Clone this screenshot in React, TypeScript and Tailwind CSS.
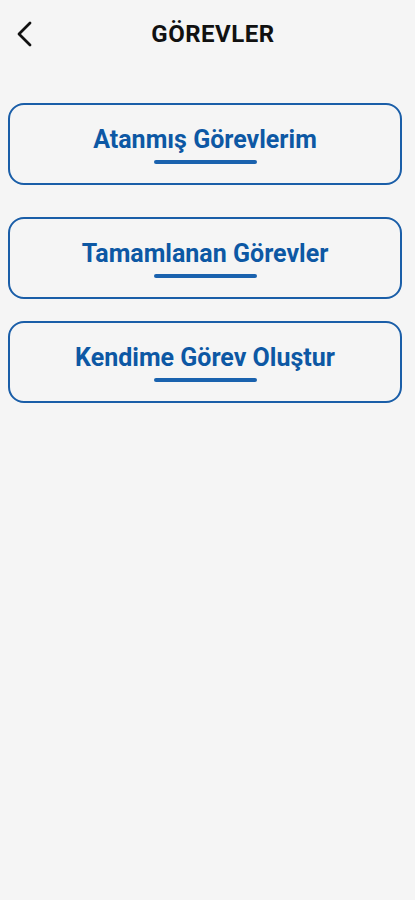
const items = ['Atanmış Görevlerim', 'Tamamlanan Görevler', 'Kendime Görev Oluştur']

export default function App() {
  return (
    <div className="min-h-[900px] bg-[#f5f5f5] font-['Roboto',sans-serif]">
      <div className="relative flex h-[68px] items-center justify-center">
        <button className="absolute left-[15px] top-[20px]">
          <svg width="18" height="28" viewBox="0 0 18 28" fill="none" stroke="#111" strokeWidth="2.8" strokeLinecap="round" strokeLinejoin="round">
            <path d="M15 3 L4 14 L15 25" />
          </svg>
        </button>
        <h1 className="ml-[11px] text-[24px] font-bold tracking-[0.5px] text-[#111]">GÖREVLER</h1>
      </div>
      <div className="flex flex-col pl-2 pt-[35px]">
        {items.map((t, i) => (
          <button
            key={t}
            className={`flex h-[82px] w-[394px] flex-col items-center justify-center gap-[6px] rounded-[16px] border-2 border-[#1a5ea8] ${i === 1 ? 'mt-[32px]' : i === 2 ? 'mt-[22px]' : ''}`}
          >
            <span className="text-[25px] leading-[29px] font-bold text-[#0d58a4]">{t}</span>
            <span className="h-[4px] w-[103px] rounded-full bg-[#1a62ae]" />
          </button>
        ))}
      </div>
    </div>
  )
}
